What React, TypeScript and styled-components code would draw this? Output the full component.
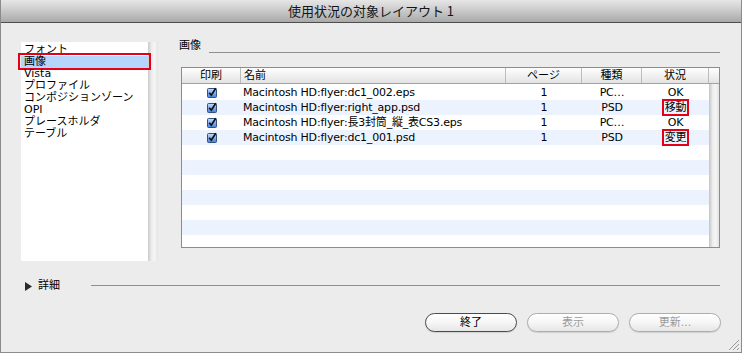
import styled, { createGlobalStyle } from 'styled-components';

const GlobalStyle = createGlobalStyle`
  html, body {
    margin: 0;
    padding: 0;
    background: #ffffff;
  }
  body {
    font-family: "DejaVu Sans", "Noto Sans CJK JP", sans-serif;
    font-size: 11px;
    color: #000;
  }
  * {
    box-sizing: border-box;
  }
`;

const categories = ['フォント', '画像', 'Vista', 'プロファイル', 'コンポジションゾーン', 'OPI', 'プレースホルダ', 'テーブル'];

const files = [
  { name: 'Macintosh HD:flyer:dc1_002.eps', page: '1', kind: 'PC…', status: 'OK', flagged: false },
  { name: 'Macintosh HD:flyer:right_app.psd', page: '1', kind: 'PSD', status: '移動', flagged: true },
  { name: 'Macintosh HD:flyer:長3封筒_縦_表CS3.eps', page: '1', kind: 'PC…', status: 'OK', flagged: false },
  { name: 'Macintosh HD:flyer:dc1_001.psd', page: '1', kind: 'PSD', status: '変更', flagged: true },
];

const EMPTY_ROWS = 7;

const CheckMark = () => (
  <svg width="10" height="11" viewBox="0 0 10 11">
    <defs>
      <linearGradient id="cbFill" x1="0" y1="0" x2="0" y2="1">
        <stop offset="0" stopColor="#c4dcfb" />
        <stop offset="1" stopColor="#3f80e2" />
      </linearGradient>
    </defs>
    <rect x="0.5" y="1.5" width="9" height="9" rx="1" fill="url(#cbFill)" stroke="#34507c" />
    <path d="M2.2 5.8 L4.3 8.2 L8.8 1.2" stroke="#0d0d0d" strokeWidth="1.7" fill="none" />
  </svg>
);

const Triangle = () => (
  <svg width="7" height="9" viewBox="0 0 7 9">
    <path d="M0 0 L7 4.5 L0 9 Z" fill="#2b2b2b" />
  </svg>
);

const Grip = () => (
  <svg width="13" height="13" viewBox="0 0 13 13">
    <path d="M12 2 L2 12 M12 6 L6 12 M12 10 L10 12" stroke="#9a9a9a" strokeWidth="1" />
  </svg>
);

const App = () => {
  return (
    <>
      <GlobalStyle />
      <Window>
        <TitleBar>使用状況の対象レイアウト 1</TitleBar>
        <Content>
          <MainRow>
            <Sidebar>
              <ListBox>
                {categories.map((c) => (
                  <ListItem key={c} $selected={c === '画像'}>
                    {c}
                    {c === '画像' && <ItemMark />}
                  </ListItem>
                ))}
              </ListBox>
              <ScrollTrack />
            </Sidebar>
            <RightPanel>
              <GroupHeader>
                <GroupLabel>画像</GroupLabel>
                <Rule />
              </GroupHeader>
              <Table>
                <HeaderRow>
                  <HeaderCell $align="center">印刷</HeaderCell>
                  <HeaderCell $align="left">名前</HeaderCell>
                  <HeaderCell $align="center">ページ</HeaderCell>
                  <HeaderCell $align="center">種類</HeaderCell>
                  <HeaderCell $align="center">状況</HeaderCell>
                  <HeaderCorner />
                </HeaderRow>
                <TableBody>
                  <Rows>
                    {files.map((f, i) => (
                      <Row key={f.name} $striped={i % 2 === 1}>
                        <Cell $align="center">
                          <CheckMark />
                        </Cell>
                        <Cell $align="left">{f.name}</Cell>
                        <Cell $align="center">{f.page}</Cell>
                        <Cell $align="center">{f.kind}</Cell>
                        <Cell $align="center">
                          <Status>
                            {f.status}
                            {f.flagged && <StatusMark />}
                          </Status>
                        </Cell>
                      </Row>
                    ))}
                    {Array.from({ length: EMPTY_ROWS }).map((_, i) => (
                      <Row key={i} $striped={(files.length + i) % 2 === 1} />
                    ))}
                  </Rows>
                  <TableScroll />
                </TableBody>
              </Table>
            </RightPanel>
          </MainRow>
          <DetailRow>
            <Triangle />
            <DetailLabel>詳細</DetailLabel>
            <Rule />
          </DetailRow>
          <ButtonRow>
            <Button $primary>終了</Button>
            <Button disabled>表示</Button>
            <Button disabled>更新...</Button>
          </ButtonRow>
        </Content>
        <GripCorner>
          <Grip />
        </GripCorner>
      </Window>
    </>
  );
};

const Window = styled.div`
  position: relative;
  width: 742px;
  height: 353px;
  display: flex;
  flex-direction: column;
  background: #ececec;
  border: 1px solid #8b8b8b;
  border-top: none;
  overflow: hidden;
`;

const TitleBar = styled.div`
  height: 23px;
  flex-shrink: 0;
  display: flex;
  align-items: center;
  justify-content: center;
  border-bottom: 1px solid #4e4e4e;
  background: linear-gradient(#e6e6e6, #cfcfcf 40%, #a9a9a9);
  font-family: "Noto Sans CJK JP", sans-serif;
  font-size: 13px;
  color: #151515;
  padding-bottom: 1px;
`;

const Content = styled.div`
  flex: 1;
  display: flex;
  flex-direction: column;
  padding: 19px 21px 0 20px;
`;

const MainRow = styled.div`
  display: flex;
  gap: 21px;
  height: 219px;
`;

const Sidebar = styled.div`
  display: flex;
  width: 137px;
`;

const ListBox = styled.div`
  flex: 1;
  background: #fff;
  padding-top: 2px;
`;

const ListItem = styled.div<{ $selected?: boolean }>`
  position: relative;
  height: 12px;
  line-height: 12px;
  padding-left: 3px;
  font-size: 11px;
  white-space: nowrap;
  background: ${(p) => (p.$selected ? '#b5d5ff' : 'transparent')};
`;

const ItemMark = styled.span`
  position: absolute;
  top: -3px;
  bottom: -2px;
  left: -3px;
  right: -3px;
  border: 2px solid #e5001a;
`;

const ScrollTrack = styled.div`
  width: 10px;
  background: linear-gradient(to right, #c9c9c9, #ececec 35%, #f6f6f6 65%, #e4e4e4);
`;

const RightPanel = styled.div`
  flex: 1;
  display: flex;
  flex-direction: column;
`;

const GroupHeader = styled.div`
  display: flex;
  align-items: flex-end;
  height: 12px;
`;

const GroupLabel = styled.span`
  line-height: 12px;
  font-size: 11px;
  margin-bottom: 2px;
`;

const Rule = styled.div`
  flex: 1;
  height: 1px;
  background: #8f8f8f;
  margin: 0 0 1px 8px;
`;

const Table = styled.div`
  margin: 13px 0 0 2px;
  height: 181px;
  display: flex;
  flex-direction: column;
  border: 1px solid #8c8c8c;
  background: #fff;
`;

const HeaderRow = styled.div`
  display: grid;
  grid-template-columns: 59px 265px 76px 60px 67px 1fr;
  height: 16px;
  flex-shrink: 0;
  border-bottom: 1px solid #a3a3a3;
  background: linear-gradient(#fefefe, #f1f1f1 50%, #e3e3e3);
`;

const HeaderCell = styled.div<{ $align: 'left' | 'center' }>`
  border-right: 1px solid #bcbcbc;
  line-height: 15px;
  font-size: 11px;
  text-align: ${(p) => p.$align};
  padding-left: ${(p) => (p.$align === 'left' ? '3px' : '0')};
`;

const HeaderCorner = styled.div``;

const TableBody = styled.div`
  flex: 1;
  display: flex;
  overflow: hidden;
`;

const Rows = styled.div`
  flex: 1;
  padding-top: 1px;
  overflow: hidden;
`;

const Row = styled.div<{ $striped?: boolean }>`
  display: grid;
  grid-template-columns: 59px 265px 76px 60px 67px;
  height: 15px;
  align-items: center;
  background: ${(p) => (p.$striped ? '#edf3fe' : '#ffffff')};
`;

const Cell = styled.div<{ $align: 'left' | 'center' }>`
  display: flex;
  justify-content: ${(p) => (p.$align === 'left' ? 'flex-start' : 'center')};
  align-items: center;
  padding-left: ${(p) => (p.$align === 'left' ? '2px' : '0')};
  font-size: 11px;
  letter-spacing: -0.2px;
  line-height: 15px;
  white-space: nowrap;
  overflow: visible;
`;

const Status = styled.span`
  position: relative;
  display: inline-block;
  line-height: 13px;
`;

const StatusMark = styled.span`
  position: absolute;
  top: -2px;
  bottom: -2px;
  left: -3px;
  right: -3px;
  border: 2px solid #e5001a;
`;

const TableScroll = styled.div`
  width: 10px;
  background: linear-gradient(to right, #c4c4c4, #ebebeb 35%, #f5f5f5 65%, #e2e2e2);
`;

const DetailRow = styled.div`
  display: flex;
  align-items: center;
  height: 12px;
  margin-top: 19px;
  padding-left: 4px;
  gap: 6px;
`;

const DetailLabel = styled.span`
  font-size: 11px;
  line-height: 12px;
  margin-right: 17px;
`;

const ButtonRow = styled.div`
  display: flex;
  justify-content: flex-end;
  gap: 10px;
  margin-top: 21px;
  margin-right: -1px;
`;

const Button = styled.button<{ $primary?: boolean }>`
  width: 92px;
  height: 19px;
  padding: 0;
  border-radius: 10px;
  border: 1px solid ${(p) => (p.$primary ? '#4b4b4b' : '#adadad')};
  background: linear-gradient(#ffffff, #f6f6f6 50%, #e6e6e6);
  box-shadow: 0 1px 1px rgba(0, 0, 0, 0.12);
  color: ${(p) => (p.$primary ? '#000' : '#9c9c9c')};
  font-family: "DejaVu Sans", "Noto Sans CJK JP", sans-serif;
  font-size: 11px;
  line-height: 17px;
`;

const GripCorner = styled.div`
  position: absolute;
  right: 1px;
  bottom: 1px;
  width: 13px;
  height: 13px;
`;

export default App;
